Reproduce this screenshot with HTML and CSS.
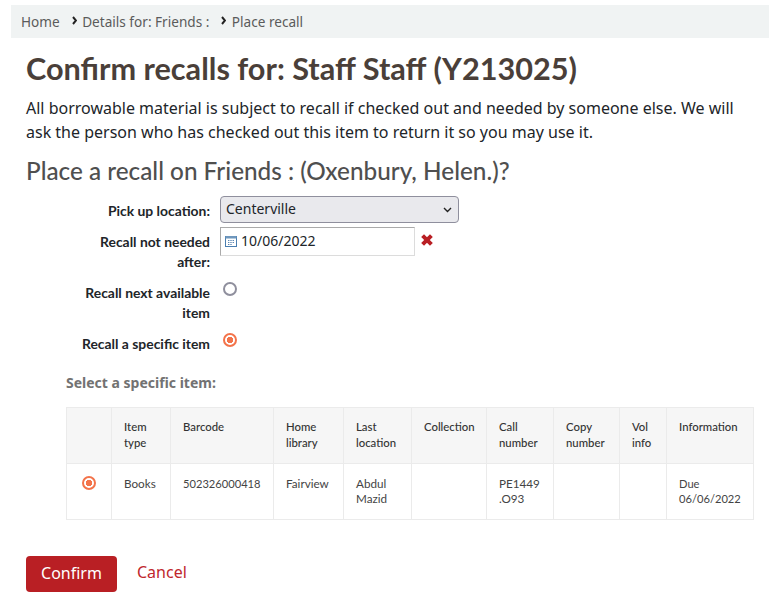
FILE: index.html
```html
<!DOCTYPE html>
<html>
    <head>
        <title>Confirm recalls</title>
        <link rel="stylesheet" href="styles.css">
    </head>
    <body>
    <nav class="breadcrumb">
        <a href="#">Home</a>
        <svg class="sep" width="5" height="9" viewBox="0 0 5 9"><path d="M1 1 4 4.5 1 8" fill="none" stroke="#222" stroke-width="2"/></svg>
        <a href="#">Details for: Friends :</a>
        <svg class="sep" width="5" height="9" viewBox="0 0 5 9"><path d="M1 1 4 4.5 1 8" fill="none" stroke="#222" stroke-width="2"/></svg>
        <a href="#">Place recall</a>
    </nav>
    <main id="content">
        <h1>Confirm recalls for: Staff Staff (Y213025)</h1>
        <p class="intro">All borrowable material is subject to recall if checked out and needed by someone else. We will ask the person who has checked out this item to return it so you may use it.</p>
        <h2>Place a recall on Friends : (Oxenbury, Helen.)?</h2>
        <form onsubmit="return false">
            <div class="form-row row-select">
                <label class="label">Pick up location:</label>
                <div class="select-wrap">
                    <select class="select">
                        <option>Centerville</option>
                    </select>
                    <svg class="select-arrow" width="9" height="6" viewBox="0 0 9 6"><path d="M1 1 4.5 4.5 8 1" fill="none" stroke="#222" stroke-width="1.4"/></svg>
                </div>
            </div>
            <div class="form-row row-date">
                <label class="label">Recall not needed after:</label>
                <div class="date-input">
                    <svg class="cal" width="12" height="12" viewBox="0 0 12 12">
                        <rect x="0.5" y="1.5" width="11" height="10" fill="#fff" stroke="#4a7eb0"/>
                        <rect x="0.5" y="1" width="11" height="2.5" fill="#6f97bd"/>
                        <path d="M3 5.5h1.4M5.3 5.5h1.4M7.6 5.5h1.4M3 7.5h1.4M5.3 7.5h1.4M7.6 7.5h1.4M3 9.5h1.4M5.3 9.5h1.4" stroke="#5c87b2"/>
                    </svg>
                    <span>10/06/2022</span>
                </div>
                <svg class="clear" width="14" height="14" viewBox="0 0 14 14">
                    <path d="M2.6 2.6 11.4 11.4M11.4 2.6 2.6 11.4" stroke="#b91f24" stroke-width="4"/>
                </svg>
            </div>
            <div class="form-row row-radio">
                <label class="label">Recall next available item</label>
                <span class="radio"></span>
            </div>
            <div class="form-row row-radio">
                <label class="label">Recall a specific item</label>
                <span class="radio checked"></span>
            </div>
            <div class="specific-title">Select a specific item:</div>
            <table class="items">
                <colgroup>
                    <col class="c-radio"><col class="c-type"><col class="c-barcode"><col class="c-home"><col class="c-last">
                    <col class="c-coll"><col class="c-call"><col class="c-copy"><col class="c-vol"><col class="c-info">
                </colgroup>
                <thead>
                    <tr>
                        <th></th>
                        <th>Item type</th>
                        <th>Barcode</th>
                        <th>Home library</th>
                        <th>Last location</th>
                        <th>Collection</th>
                        <th>Call number</th>
                        <th>Copy number</th>
                        <th>Vol info</th>
                        <th>Information</th>
                    </tr>
                </thead>
                <tbody>
                    <tr>
                        <td class="radio-cell"><span class="radio checked"></span></td>
                        <td>Books</td>
                        <td class="digits">502326000418</td>
                        <td>Fairview</td>
                        <td>Abdul Mazid</td>
                        <td></td>
                        <td>PE1449 .O93</td>
                        <td></td>
                        <td></td>
                        <td class="digits">Due 06/06/2022</td>
                    </tr>
                </tbody>
            </table>
            <div class="actions">
                <button class="btn-confirm" type="submit">Confirm</button>
                <a class="cancel" href="#">Cancel</a>
            </div>
        </form>
    </main>
    </body>
</html>
```

FILE: styles.css
```css
body {
    margin: 0;
    padding: 5px 6px 0 11px;
    font-family: "Noto Sans", sans-serif;
    font-size: 16px;
    color: #212529;
    background-color: white;
}

.breadcrumb {
    display: flex;
    align-items: center;
    height: 33px;
    padding-left: 10px;
    background-color: #f0f3f3;
    font-size: 13.6px;
}
.breadcrumb a {
    color: #5b5b5b;
    text-decoration: none;
}
.sep {
    margin: -2px 5.5px 0 12px;
}

#content {
    padding-left: 15px;
}

h1 {
    margin: 12px 0 0;
    font-family: Lato, sans-serif;
    font-size: 30.65px;
    line-height: 38px;
    font-weight: bold;
    color: #4a3f39;
}

.intro {
    margin: 8px 0 0;
    line-height: 24px;
    width: 728px;
}

h2 {
    margin: 12px 0 0;
    font-family: Lato, sans-serif;
    font-size: 24.3px;
    line-height: 29px;
    font-weight: 500;
    color: #4f4f4f;
}

.form-row {
    display: flex;
    align-items: flex-start;
}
.row-select {
    margin-top: 11px;
}
.row-date {
    margin-top: 4px;
}
.row-radio {
    margin-top: 6px;
}

.label {
    width: 140px;
    margin: 0 10px 0 44px;
    padding-top: 5px;
    flex: none;
    text-align: right;
    font-family: Lato, sans-serif;
    font-weight: bold;
    font-size: 13.9px;
    line-height: 20px;
}

.select-wrap {
    position: relative;
    width: 239px;
    height: 27px;
}
.select {
    appearance: none;
    box-sizing: border-box;
    width: 100%;
    height: 100%;
    padding: 0 0 2px 5px;
    font-family: "Noto Sans", sans-serif;
    font-size: 14px;
    color: #212529;
    background-color: #e9e9ed;
    border: 1px solid #8f8f9d;
    border-radius: 4px;
}
.select-arrow {
    position: absolute;
    top: 11px;
    right: 7px;
}

.date-input {
    display: flex;
    align-items: center;
    gap: 4px;
    box-sizing: border-box;
    width: 195px;
    height: 29px;
    padding: 0 0 2px 4px;
    border: 1px solid #dcdcdc;
    border-top-color: #aaa;
    border-left-color: #aaa;
    font-size: 14px;
    color: #212529;
}
.clear {
    margin: 6px 0 0 5px;
}

.radio {
    display: block;
    box-sizing: border-box;
    width: 14px;
    height: 14px;
    margin: 4px 0 0 3px;
    border: 2px solid #8f8f9d;
    border-radius: 50%;
}
.radio.checked {
    border-color: #f3734a;
    background: radial-gradient(circle, #f3734a 0 3px, white 3.5px);
}

.specific-title {
    margin: 19px 0 0 40px;
    font-weight: bold;
    font-size: 14px;
    line-height: 20px;
    color: #727272;
}

.items {
    margin: 14px 0 0 40px;
    width: 687px;
    table-layout: fixed;
    border-collapse: collapse;
    font-family: Lato, sans-serif;
    font-size: 11.7px;
    line-height: 15px;
    color: #444;
}
.items th, .items td {
    border: 1px solid #ebebeb;
    text-align: left;
    vertical-align: top;
}
.items th {
    padding: 11px 12px 12px;
    background-color: #f6f6f6;
    font-size: 11.35px;
    font-weight: 500;
    line-height: 16px;
    color: #333;
}
.items td {
    padding: 12px 12px 13px;
}
.items td.digits {
    font-size: 11.15px;
}
.items td.radio-cell {
    padding: 8px 0 0 12px;
}
.c-radio { width: 45px; }
.c-type { width: 59px; }
.c-barcode { width: 103px; }
.c-home { width: 70px; }
.c-last { width: 68px; }
.c-coll { width: 75px; }
.c-call { width: 67px; }
.c-copy { width: 66px; }
.c-vol { width: 47px; }
.c-info { width: 87px; }

.actions {
    display: flex;
    align-items: center;
    margin-top: 36px;
}
.btn-confirm {
    width: 91px;
    height: 36px;
    padding: 0 0 2px;
    font-family: "Noto Sans", sans-serif;
    font-size: 16px;
    color: white;
    background-color: #b91f24;
    border: none;
    border-radius: 4px;
}
.cancel {
    margin-left: 20px;
    margin-top: -4px;
    color: #c0272d;
    text-decoration: none;
}
```
